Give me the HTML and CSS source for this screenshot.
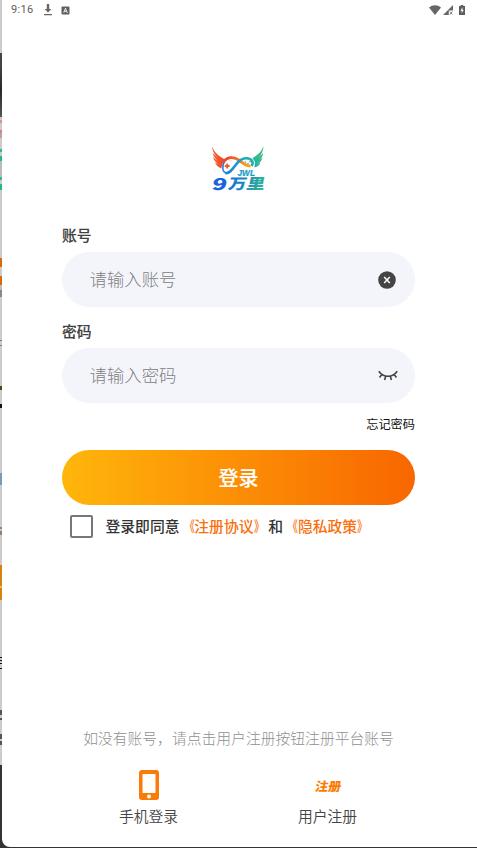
FILE: index.html
```html
<!DOCTYPE html>
<html lang="zh-CN">
<head>
<meta charset="utf-8">
<title>登录</title>
<link rel="stylesheet" href="styles.css">
</head>
<body>
<main class="screen">
  <header class="status">
    <span class="time">9:16</span>
    <svg class="download" width="10" height="12" viewBox="0 0 10 12"><path d="M3.800 0h2.400v5h2.200L5 8.600 1.600 5h2.200zM1 10h8v1.200H1z" fill="#666"/></svg>
    <svg class="app" width="9" height="9" viewBox="0 0 9 9"><rect x=".5" y=".5" width="8" height="8" rx="1" fill="#606060"/><path d="M2.700 6.800 4.500 2.200l1.800 4.600M3.500 5.300h2" fill="none" stroke="#fff" stroke-width=".9"/></svg>
    <svg class="wifi" width="12" height="10" viewBox="0 0 12 10"><path d="M0 2.600C3-.7 9-.7 12 2.600L6 10z" fill="#666"/></svg>
    <svg class="signal" width="10" height="10" viewBox="0 0 10 10"><path d="M10 0v5.500H5.800V10H0z" fill="#666"/><path d="m6.800 6.500 2.500 3m0-3-2.500 3" stroke="#777" stroke-width=".9"/></svg>
    <svg class="battery" width="6" height="10" viewBox="0 0 6 10"><path d="M1.700 0h2.600v1H6v9H0V1h1.700z" fill="#5c5c5c"/><path d="M3.600 2 1.400 5.700h1.300v2.800l2-3.800H3.400z" fill="#fff"/></svg>
  </header>

  <svg class="logo" width="54" height="46" viewBox="0 0 54 46">
    <defs>
      <linearGradient id="fire" gradientUnits="userSpaceOnUse" x1="0" y1="0" x2="36" y2="0"><stop stop-color="#f5602a"/><stop offset=".45" stop-color="#f0442c"/><stop offset="1" stop-color="#ff9c12"/></linearGradient>
      <linearGradient id="sea" gradientUnits="userSpaceOnUse" x1="14" y1="28" x2="50" y2="6"><stop stop-color="#167ee0"/><stop offset=".55" stop-color="#16a9c0"/><stop offset="1" stop-color="#3dbd7b"/></linearGradient>
      <linearGradient id="word" gradientUnits="userSpaceOnUse" x1="-16" y1="0" x2="38" y2="0"><stop stop-color="#1763e2"/><stop offset=".5" stop-color="#1782c8"/><stop offset="1" stop-color="#36b98c"/></linearGradient>
    </defs>
    <path d="M1.300 0c1 5.500 6 10 13 13.500l-3 5-1 4C8 21.500 5 19.500 4 16.500l4 2C5 16.500 2.500 14 2 11l5 4.500C4 12 2 10 1.800 7l5 5C3.500 8 1 5 1.300 0z" fill="url(#fire)"/>
    <path d="M52.500 0C51 5 47 9 41.500 12l2.500 4-.5 5.500c3-1 5-2 6-5l-3.500 2c3-2 5-4 5.500-7l-4.500 4c3-3 5-5 5-8.500l-4.500 4.500c3-3 5-7 5-11.500z" fill="url(#sea)"/>
    <path d="M13.500 15.500c-3 5-2 11 2 11.500" fill="none" stroke="#2a78d8" stroke-width="1.500"/>
    <path d="M13 15.500c3-4.500 9-5 14-2 4 2.500 7 7 12.500 6.300" fill="none" stroke="url(#fire)" stroke-width="2.800"/>
    <path d="M14.500 27.300c8 .5 10-14.500 20-15.100 6-.4 9 4 6 7.800" fill="none" stroke="url(#sea)" stroke-width="2.500"/>
    <path d="M13.800 20h4.800M16.200 17.600v4.800" stroke="#f45a24" stroke-width="1.800"/>
    <circle cx="34.500" cy="16" r=".8" fill="#43b96f"/><circle cx="39" cy="15.800" r=".8" fill="#1c9fbc"/><circle cx="37" cy="17.500" r=".8" fill="#3eb587"/>
    <text class="logo-en" x="26.500" y="29.500" textLength="17.500" lengthAdjust="spacingAndGlyphs">JWL</text>
    <text class="logo-cn nine" transform="translate(0 43.800) skewX(-12)" textLength="15" lengthAdjust="spacingAndGlyphs">9</text>
    <text class="logo-cn" transform="translate(16.500 42.700) skewX(-12)" textLength="36.500" lengthAdjust="spacingAndGlyphs">万里</text>
  </svg>

  <form class="form">
    <label class="label">账号</label>
    <div class="field"><span>请输入账号</span>
      <svg class="clear" width="18" height="18" viewBox="0 0 18 18"><circle cx="9" cy="9" r="8.800" fill="#444"/><path d="m6.200 6 5.600 6m0-6-5.600 6" stroke="#fff" stroke-width="1.500"/></svg>
    </div>
    <label class="label">密码</label>
    <div class="field"><span>请输入密码</span>
      <svg class="eye" width="20" height="12" viewBox="0 0 20 12"><path d="M.8 1.200c4.500 6.800 13.900 6.800 18.400 0M3.900 4.600 1.500 7.500M7.700 6.300 6.600 10M12.300 6.300l1.100 3.700M16.100 4.600l2.400 2.900" fill="none" stroke="#444" stroke-width="1.600"/></svg>
    </div>
    <a class="forgot">忘记密码</a>
    <button class="submit" type="button">登录</button>
    <div class="agree"><i class="box"></i><span class="terms">登录即同意<b><i class="open">《</i>注册协议<i class="close">》</i></b>和<b><i class="open">《</i>隐私政策<i class="close">》</i></b></span></div>
  </form>

  <p class="hint">如没有账号，请点击用户注册按钮注册平台账号</p>
  <nav class="options">
    <a class="option">
      <svg width="20" height="30" viewBox="0 0 20 30"><path fill-rule="evenodd" d="M3 0h14q3 0 3 3v24q0 3-3 3H3q-3 0-3-3V3q0-3 3-3zm.5 4v19h13V4zM10 24.500a2 2 0 1 0 0 4 2 2 0 0 0 0-4z" fill="#fb7b08"/></svg>
      <span>手机登录</span>
    </a>
    <a class="option">
      <svg width="30" height="30" viewBox="0 0 30 30"><text class="reg" transform="translate(1.500 20.500) skewX(-10)" textLength="26" lengthAdjust="spacingAndGlyphs">注册</text></svg>
      <span>用户注册</span>
    </a>
  </nav>
</main>
</body>
</html>
```

FILE: styles.css
```css
* { box-sizing: border-box; }
body {
  margin: 0;
  width: 477px;
  height: 848px;
  overflow: hidden;
  padding: 0 0 1px 2px;
  font-family: "Noto Sans CJK SC", sans-serif;
  background: linear-gradient(#ccc 53px, #444 53px 65px, #292929 90px, #555 117px, #ccc 117px 120px, #e88 120px 123px, #ccc 123px 130px, #e77 130px 133px, #aaa 133px 138px, #ccc 138px 149px, #3b9 149px 152px, #ccc 152px 156px, #2b8 156px 161px, #bbb 161px 177px, #3b9 177px 180px, #ccc 180px 184px, #2b8 184px 190px, #ccc 190px 258px, #d96a0c 258px 267px, #ccc 267px 276px, #d96a0c 276px 285px, #bbb 285px 290px, #888 290px 297px, #ccc 297px 340px, #777 340px 341px, #ccc 341px 345px, #777 345px 346px, #ccc 346px 386px, #542 386px 390px, #ccc 390px 404px, #111 404px 408px, #ccc 408px 473px, #79b 473px 485px, #ccc 485px 527px, #888 527px 529px, #ccc 529px 531px, #a75 531px 533px, #888 533px 535px, #ccc 535px 565px, #d6820d 565px 586px, #ddb77d 586px 588px, #d6820d 588px 600px, #ccc 600px 657px, #111 657px 658px, #ccc 658px 660px, #111 660px 661px, #ccc 661px 663px, #111 663px 664px, #ccc 664px 668px, #111 668px 669px, #ccc 669px 710px, #555 710px 715px, #ccc 715px 718px, #555 718px 720px, #ccc 720px 734px, #555 734px 739px, #ccc 739px 741px, #555 741px 745px, #ccc 745px 765px, #333 765px);
}
.screen {
  height: 847px;
  padding: 0 62px 0 60px;
  background: #fff;
  border-bottom-left-radius: 8px;
  display: flex;
  flex-direction: column;
}
.status {
  height: 20px;
  margin: 0 -53px 0 -51px;
  display: flex;
  align-items: center;
}
.time { font: 11px/20px Roboto, sans-serif; letter-spacing: .3px; color: #606060; width: 32px; }
.app { margin-left: 8px; }
.wifi { margin: 0 0 1px auto; }
.signal { margin: 0 0 1px 2px; }
.battery { margin: 0 3px 1px 6px; }
.logo { display: block; margin: 126px 0 0 149px; overflow: visible; flex: none; }
.logo-en { font: italic 900 8.5px "Liberation Sans", sans-serif; fill: #169cc5; stroke: #169cc5; stroke-width: .2px; }
.logo-cn { font: 900 14.5px "Noto Sans CJK SC", sans-serif; fill: url(#word); }
.logo-cn.nine { fill: #1763e2; font-size: 16px; }
.form { display: flex; flex-direction: column; margin-top: 32px; }
.label { height: 28px; font-size: 14.8px; line-height: 22px; font-weight: 500; color: #404040; -webkit-text-stroke: .15px #404040; }
.field {
  height: 55px;
  margin-bottom: 13px;
  padding: 0 18px 2px 27.5px;
  border-radius: 28px;
  background: #f4f5fb;
  display: flex;
  align-items: center;
  justify-content: space-between;
  font-size: 17.4px;
  font-weight: 300;
  color: #808084;
}
.clear { margin: 2px 1px 0 0; }
.eye { margin: 2px -.5px 0 0; }
.forgot { height: 36px; margin-top: -2px; font-size: 12.2px; line-height: 20px; text-align: right; color: #111; }
.submit {
  height: 55px;
  border: 0;
  padding: 0;
  border-radius: 28px;
  background: linear-gradient(90deg, #ffb60b, #f86600);
  color: #fff;
  font: 500 20px/54px "Noto Sans CJK SC", sans-serif;
  -webkit-text-stroke: .15px #fff;
}
.agree { height: 43px; display: flex; align-items: center; font-size: 14.8px; line-height: 22px; font-weight: 500; color: #333; padding-left: 8px; }
.box { width: 23px; height: 23px; border: 2px solid #777; border-radius: 2px; margin-right: 12.5px; }
.terms { padding-bottom: 2px; }
.agree b { font-weight: 500; color: #fa700d; }
.open, .close { display: inline-block; font-style: normal; transform: scaleX(.7); }
.open { transform-origin: right; }
.close { transform-origin: left; }
.hint { margin: 178px 0 0; font-size: 14.8px; line-height: 24px; font-weight: 300; text-align: center; color: #909090; white-space: nowrap; }
.options { display: flex; margin-top: 20px; }
.option { flex: none; width: 179px; display: flex; flex-direction: column; align-items: center; font-size: 14.8px; line-height: 22px; color: #444; font-weight: 350; }
.option:first-child { margin-left: -3px; }
.option svg { display: block; margin-bottom: 5px; }
.reg { font: 900 12.5px "Noto Sans CJK SC", sans-serif; fill: #fb7b08; }
```
